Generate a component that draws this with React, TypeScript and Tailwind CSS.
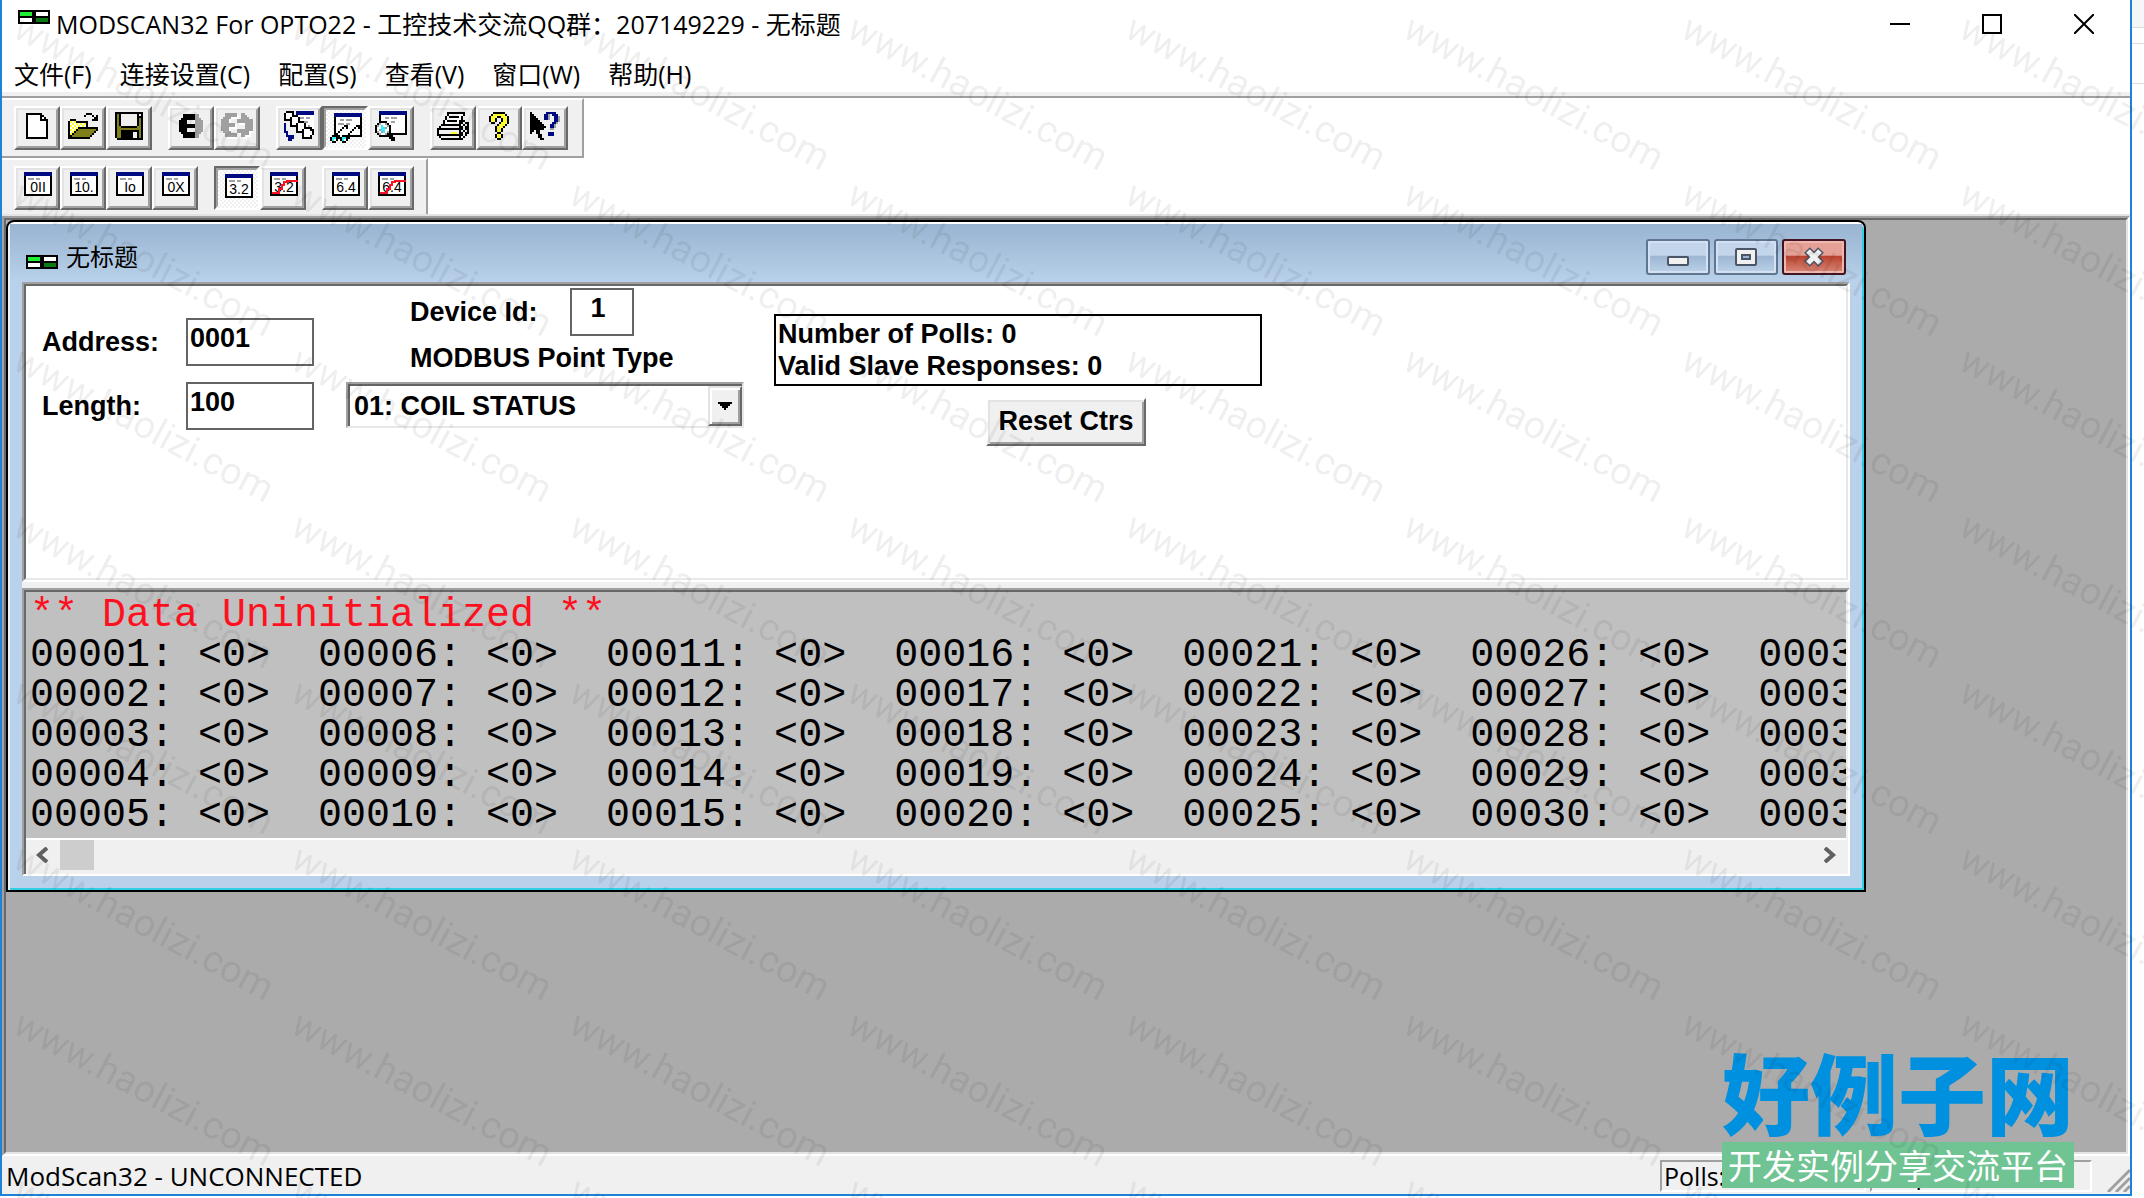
import React from "react";

const COLORS: Record<string, string> = {
  k: "#000000",
  w: "#ffffff",
  n: "#000a80",
  g: "#a0a0a0",
  y: "#ffff30",
  d: "#80801a",
  c: "#30f0ff",
};

function Pixels({ rows, label }: { rows: string[]; label: string }) {
  const w = rows[0].length;
  const h = rows.length;
  return (
    <svg width={w * 2} height={h * 2} viewBox={`0 0 ${w} ${h}`} shapeRendering="crispEdges" role="img" aria-label={label}>
      {rows.flatMap((row, y) =>
        row.split("").map((ch, x) => (COLORS[ch] ? <rect key={`${x}-${y}`} x={x} y={y} width={1} height={1} fill={COLORS[ch]} /> : null)),
      )}
    </svg>
  );
}

const NEW_FILE = [
  "kkkkkkkk...",
  "kwwwwwwkk..",
  "kwwwwwwkwk.",
  "kwwwwwwkkkk",
  "kwwwwwwwwwk",
  "kwwwwwwwwwk",
  "kwwwwwwwwwk",
  "kwwwwwwwwwk",
  "kwwwwwwwwwk",
  "kwwwwwwwwwk",
  "kwwwwwwwwwk",
  "kwwwwwwwwwk",
  "kkkkkkkkkkk",
];
const OPEN_FILE = [
  ".........kkk...",
  "........k...k.k",
  ".............kk",
  ".kkk........kkk",
  "kywykkkkkk.....",
  "kwywywywyk.....",
  "kywywywywk.....",
  "kwywykkkkkkkkkk",
  "kywykdddddddddk",
  "kwykdddddddddk.",
  "kykdddddddddk..",
  "kkdddddddddk...",
  "kkkkkkkkkkk....",
];
const SAVE_FILE = [
  "kkkkkkkkkkkkkk",
  "kdk........k.k",
  "kdk........kkk",
  "kdk........kdk",
  "kdk........kdk",
  "kdk........kdk",
  "kdk........kdk",
  "kddkkkkkkkkddk",
  "kddddddddddddk",
  "kddkkkkkkkkkdk",
  "kddkkkkkk..kdk",
  "kddkkkkkk..kdk",
  "kddkkkkkk..kdk",
  ".kkkkkkkkkkkkk",
];
const CONNECT = [
  "..kkkkkkgg..",
  "..kkkkkkgg..",
  ".kkkkkkkggg.",
  "kkkk....gggg",
  "kkkk....gggg",
  "kkkkkkkkgggg",
  "kkkkkkkkgggg",
  "kkkk....gggg",
  "kkkk....gggg",
  ".kkkkkkkggg.",
  "..kkkkkkgg..",
  "..kkkkkkgg..",
];
const DISCONNECT = [
  "..gggggg..gg....",
  "..ggggggw.ggg...",
  ".ggggwwww.gggg..",
  "ggggw...gggggggg",
  "ggggw...gggggggg",
  "ggggggg..wwwgggg",
  "gggggggw....gggg",
  "ggggwwww....gggg",
  "ggggw...gggggggg",
  ".gggg...ggggggww",
  "..gggggg.wggggw.",
  "..ggggggw.ggwww.",
  "...wwwwww..ww...",
];
const CASCADE = [
  ".kkkk.nnnnnnnnn",
  "kwwwk.nnnnnnnnn",
  "kwwwkkkwwwwwwww",
  "kwwkwwwkggwggww",
  "kkkkwwwkwwwwwww",
  "...kwwwkkkggwww",
  "n..kwwkwwwkwwww",
  "n..kkkkwwwkwgww",
  "n.....kwwwkkkkw",
  "n.....kwwkwwwkk",
  "nn....kkkkwwwwk",
  ".n.......kwwwwk",
  ".nnnn....kwwwk.",
  "..nnn....kkkkk.",
  "..nn...........",
];
const GLASSES = [
  "..nnnnnnnnnnnnnn",
  "..nnnnnnnnnnnnnn",
  "..kwwwwwwwwwwwwk",
  "..kwwggwgggwwwwk",
  "..kwwwwwwwwwwwwk",
  "..kwgggwggwwwwwk",
  "..kwwwwkkwwwwkkk",
  "..kwwwkwkwwwkwkk",
  "..kwwkwwwwwkwwwk",
  "..kwkwwwwwkwwwwk",
  "..kkwwwwwkwwwwwk",
  ".kkkkwkkkkkkkkkk",
  "kcckkkcckk......",
  "kcwk.kcwk.......",
  ".kk...kk........",
];
const MAGNIFIER = [
  "..nnnnnnnnnnnnnn",
  "..nnnnnnnnnnnnnn",
  "..kwwwwwwwwwwwwk",
  "..kwwggwgggwwwwk",
  "..kwwwwwwwwwwwwk",
  "..kkkkwwggwwwwwk",
  ".kgwwgkwwwwwwwwk",
  "kgwcwwgkwwwwwwwk",
  "kwwccgwkwwwwwwwk",
  "kwgccwwkwwwwwwwk",
  "kgwgcwgkwwwwwwwk",
  ".kgwwgkkkkkkkkkk",
  "..kkkkkkk.......",
  ".......kkk......",
  "........kk......",
];
const PRINTER = [
  ".....kkkkkkkkk..",
  ".....kwwwwwwwk..",
  "....kwkkkkkwk...",
  "....kwwwwwwwk...",
  "...kwkkkkkwkkk..",
  "...kwwwwwwwkk.kk",
  "..kkkkkkkkkk.k.k",
  ".k.........kk.kk",
  "kkkkkkkkkkkkk.kk",
  "k..........k.k.k",
  "k......yyy.kk.kk",
  "kkkkkkkkkkkkk.k.",
  ".k.........k.k..",
  "..kkkkkkkkkkk...",
];
const HELP = [
  "..kkkkkk..",
  ".kyyyyyyk.",
  "kyyykkyyyk",
  "kyyk..kyyk",
  "kyyk..kyyk",
  ".kk..kyyyk",
  "....kyyyk.",
  "...kyyyk..",
  "...kyyk...",
  "...kyyk...",
  "....kk....",
  "...kyyk...",
  "...kyyk...",
  "....kk....",
];
const CONTEXT_HELP = [
  "k.......nnnnn..",
  "kk.....nng.nnn.",
  "kkk....nng..nng",
  "kkkk...nng..nng",
  "kkkkk.......nng",
  "kkkkkk.....nng.",
  "kkkkkkk...nng..",
  "kkkkkkkk..nng..",
  "kkkkkkk...gg...",
  "kk.kk..........",
  "k..kk....nnn...",
  "....kk...nnn...",
  "....kk.........",
  ".....kk........",
];

function FormatIcon({ text, struck }: { text: string; struck?: boolean }) {
  return (
    <svg width="28" height="24" viewBox="0 0 28 24" className="mb-1 ml-0.5" aria-hidden="true">
      <g shapeRendering="crispEdges">
        <rect x="0" y="0" width="28" height="24" fill="#000" />
        <rect x="0" y="0" width="28" height="4" fill="#000a80" />
        <rect x="2" y="4" width="24" height="18" fill="#fff" />
        <rect x="4" y="6" width="6" height="2" fill="#a0a0a0" />
        <rect x="12" y="6" width="4" height="2" fill="#a0a0a0" />
      </g>
      <text x="14" y="20" textAnchor="middle" fontFamily="Liberation Sans" fontSize="14" fill="#000">
        {text}
      </text>
      {struck && <path d="M2 21h7v-4h3v-4h2v-3h3V9h11" fill="none" stroke="#ff1020" strokeWidth="2" shapeRendering="crispEdges" />}
    </svg>
  );
}

function ToolButton({ label, pressed, children }: { label: string; pressed?: boolean; children: React.ReactNode }) {
  return pressed ? (
    <button
      aria-label={label}
      aria-pressed="true"
      className="h-11 w-[46px] border-2 border-t-[#696969] border-l-[#696969] border-r-white border-b-white bg-[repeating-conic-gradient(#ffffff_0_25%,#f0f0f0_0_50%)] bg-size-[4px_4px]"
    >
      <span className="flex h-10 items-center justify-center border-2 border-transparent border-t-[#a0a0a0] border-l-[#a0a0a0] pl-0.5">{children}</span>
    </button>
  ) : (
    <button
      aria-label={label}
      className="h-11 w-[46px] border-2 border-t-white border-l-white border-r-[#696969] border-b-[#696969] bg-[#f0f0f0]"
    >
      <span className="flex h-10 items-center justify-center border-2 border-t-[#e3e3e3] border-l-[#e3e3e3] border-r-[#a0a0a0] border-b-[#a0a0a0] pb-1">{children}</span>
    </button>
  );
}

function AppIcon() {
  return (
    <svg width="32" height="14" viewBox="0 0 32 14" shapeRendering="crispEdges" aria-hidden="true">
      <rect width="32" height="14" fill="#000" />
      <rect x="2" y="2" width="12" height="4" fill="#20f030" />
      <rect x="18" y="2" width="12" height="4" fill="#fff" />
      <rect x="2" y="8" width="12" height="4" fill="#fff" />
      <rect x="18" y="8" width="12" height="4" fill="#0c7a14" />
    </svg>
  );
}

const MENU = ["文件(F)", "连接设置(C)", "配置(S)", "查看(V)", "窗口(W)", "帮助(H)"];

const pad = (n: number) => String(n).padStart(5, "0");
const LINES = [1, 2, 3, 4, 5].map((start) =>
  Array.from({ length: 7 }, (_, i) => `${pad(start + i * 5)}: <0>`).join("  "),
);

const CHILD_BUTTON =
  "flex h-9 w-16 items-center justify-center rounded-[3px] border-2 border-[#5f7590] bg-linear-to-b from-[#c3d5ea] from-45% via-[#9db5d0] via-46% to-[#bcd2ea] shadow-[inset_0_0_0_2px_#d3e1f2]";

function ChildWindow() {
  return (
    <section
      aria-label="无标题"
      className="absolute top-0 left-0 flex w-[1860px] max-w-full flex-col rounded-t-lg border-2 border-black bg-[#b9d1ea] shadow-[inset_0_2px_0_#ffffff,inset_2px_0_0_#e8f2fb,inset_-2px_-2px_0_#30cfe4]"
    >
      <header className="mx-0.5 mt-0.5 flex h-[58px] items-center bg-linear-to-b from-[#99b4d1] to-[#b9d1ea] px-4 pt-2">
        <span className="pt-2.5">
          <AppIcon />
        </span>
        <h2 className="flex-1 pl-2 text-2xl">无标题</h2>
        <div className="flex gap-1">
          <button aria-label="最小化" className={CHILD_BUTTON}>
            <span className="mt-2 h-2.5 w-[22px] rounded-xs border-2 border-[#4b5568] bg-[#f0f0f0]" />
          </button>
          <button aria-label="最大化" className={CHILD_BUTTON}>
            <span className="flex h-[18px] w-[22px] items-center justify-center rounded-xs border-2 border-[#4b5568] bg-[#f0f0f0]">
              <span className="h-1.5 w-2.5 border-2 border-[#4b5568] bg-[#9db5d0]" />
            </span>
          </button>
          <button
            aria-label="关闭"
            className="flex h-9 w-16 items-center justify-center rounded-[3px] border-2 border-[#431422] bg-linear-to-b from-[#e5a196] from-45% via-[#b9402c] via-46% to-[#d88878] shadow-[inset_0_0_0_2px_#eeb8ae]"
          >
            <svg width="24" height="20" viewBox="0 0 24 20" aria-hidden="true">
              <path d="M5 3l14 14M19 3L5 17" stroke="#4b5568" strokeWidth="8" fill="none" />
              <path d="M6 4l12 12M18 4L6 16" stroke="#f2f2f2" strokeWidth="5" fill="none" />
            </svg>
          </button>
        </div>
      </header>

      <div className="mx-3.5 mb-3.5 flex flex-col">
        <div className="flex h-[300px] items-start border-2 border-t-[#a0a0a0] border-l-[#a0a0a0] border-r-white border-b-white">
          <form
            className="flex h-full flex-1 items-start border-2 border-t-[#696969] border-l-[#696969] border-r-[#e8e8e8] border-b-[#e8e8e8] bg-white font-['Liberation_Sans','Noto_Sans_CJK_SC',sans-serif] text-[27px] leading-8 font-bold"
            onSubmit={(e) => e.preventDefault()}
          >
            <div className="grid grid-cols-[144px_128px] gap-x-0 gap-y-4 pt-8 pl-4">
              <label htmlFor="address" className="pt-2">
                Address:
              </label>
              <input id="address" defaultValue="0001" className="h-12 border-2 border-[#646464] bg-white px-0.5 pb-2 outline-none" />
              <label htmlFor="length" className="pt-2">
                Length:
              </label>
              <input id="length" defaultValue="100" className="h-12 border-2 border-[#646464] bg-white px-0.5 pb-2 outline-none" />
            </div>

            <div className="ml-8 flex flex-col pt-0.5">
              <div className="ml-16 flex h-12 w-[224px] items-start justify-between">
                <label htmlFor="device" className="pt-2">
                  Device Id:
                </label>
                <input id="device" defaultValue="1" className="h-12 w-16 border-2 border-[#646464] bg-white pr-2 pb-2 text-center outline-none" />
              </div>
              <label htmlFor="point" className="mt-1.5 ml-16 h-[40px] pt-0">
                MODBUS Point Type
              </label>
              <div className="relative border-2 border-t-[#a0a0a0] border-l-[#a0a0a0] border-r-[#e8e8e8] border-b-[#e8e8e8]">
                <select
                  id="point"
                  className="block h-[42px] w-[394px] appearance-none border-t-2 border-l-2 border-[#646464] bg-white pl-1 outline-none"
                >
                  <option>01: COIL STATUS</option>
                  <option>02: INPUT STATUS</option>
                  <option>03: HOLDING REGISTER</option>
                  <option>04: INPUT REGISTER</option>
                </select>
                <span className="pointer-events-none absolute top-0.5 right-0 bottom-0 flex w-[34px] items-center justify-center border-2 border-t-[#e3e3e3] border-l-[#e3e3e3] border-r-[#696969] border-b-[#696969] bg-[#f0f0f0] shadow-[inset_2px_2px_0_#ffffff,inset_-2px_-2px_0_#a0a0a0]">
                  <svg width="14" height="8" viewBox="0 0 7 4" shapeRendering="crispEdges" aria-hidden="true">
                    <path d="M0 0h7v1H6v1H5v1H4v1H3V3H2V2H1V1H0z" />
                  </svg>
                </span>
              </div>
            </div>

            <div className="ml-[30px] flex w-[488px] flex-col items-center pt-7">
              <div className="w-full border-2 border-black pt-0.5 pb-0.5 pl-0.5">
                <p>Number of Polls: 0</p>
                <p>Valid Slave Responses: 0</p>
              </div>
              <button
                type="button"
                className="mt-3 ml-24 h-12 w-40 border-2 border-t-white border-l-white border-r-[#696969] border-b-[#696969] bg-[#f0f0f0] pb-0.5 shadow-[inset_2px_2px_0_#e3e3e3,inset_-2px_-2px_0_#a0a0a0]"
              >
                Reset Ctrs
              </button>
            </div>
          </form>
        </div>

        <div className="h-1.5 bg-[#f0f0f0]" />

        <div className="border-2 border-t-[#a0a0a0] border-l-[#a0a0a0] border-r-white border-b-white">
          <div className="border-2 border-t-[#696969] border-l-[#696969] border-r-[#f0f0f0] border-b-0">
            <div className="overflow-hidden bg-[#c0c0c0] pt-1 pb-0.5 pl-1 font-['Liberation_Mono',monospace] text-[40px] leading-10 whitespace-pre">
              <p className="text-[#ff1020]">** Data Uninitialized **</p>
              {LINES.map((line) => (
                <p key={line}>{line}</p>
              ))}
            </div>
            <div className="flex h-9 items-start border-t-2 border-white bg-[#f0f0f0]">
              <button aria-label="向左滚动" className="flex h-[30px] w-8 items-center justify-center">
                <svg width="14" height="16" viewBox="0 0 14 16" aria-hidden="true">
                  <path d="M12 1L4 8l8 7" fill="none" stroke="#606060" strokeWidth="4" />
                </svg>
              </button>
              <div className="flex flex-1 pl-0.5">
                <div className="h-[30px] w-[34px] bg-[#cdcdcd]" />
              </div>
              <button aria-label="向右滚动" className="flex h-[30px] w-8 items-center justify-center">
                <svg width="14" height="16" viewBox="0 0 14 16" aria-hidden="true">
                  <path d="M2 1l8 7-8 7" fill="none" stroke="#606060" strokeWidth="4" />
                </svg>
              </button>
            </div>
          </div>
        </div>
      </div>
    </section>
  );
}

function Watermark() {
  return (
    <div aria-hidden="true" className="pointer-events-none absolute inset-0 overflow-hidden">
      <div className="grid auto-rows-[166px] grid-cols-[repeat(8,278px)] pl-[30px]">
        {Array.from({ length: 64 }, (_, i) => (
          <span
            key={i}
            className="origin-top-left rotate-[28deg] font-['Roboto',sans-serif] text-[38px] font-normal whitespace-nowrap text-black/8"
          >
            www.haolizi.com
          </span>
        ))}
      </div>
    </div>
  );
}

export default function App() {
  return (
    <div className="relative flex h-screen min-h-[1000px] overflow-hidden bg-white pb-0.5 font-['Open_Sans','Noto_Sans_CJK_SC',sans-serif] text-black">
      <div className="flex min-w-0 flex-1 flex-col border-2 border-t-0 border-[#1e82d6] bg-white">
        <header className="flex h-[54px] items-start pl-4">
          <span className="pt-2.5">
            <AppIcon />
          </span>
          <h1 className="flex-1 pt-2 pl-1.5 text-[25px] leading-8">MODSCAN32 For OPTO22 - 工控技术交流QQ群：207149229 - 无标题</h1>
          <button aria-label="最小化" className="flex h-12 w-[92px] items-center justify-center">
            <svg width="20" height="20" viewBox="0 0 20 20" shapeRendering="crispEdges" aria-hidden="true">
              <path d="M0 10h20" stroke="#000" strokeWidth="2" />
            </svg>
          </button>
          <button aria-label="最大化" className="flex h-12 w-[92px] items-center justify-center">
            <span className="h-5 w-5 border-2 border-black" />
          </button>
          <button aria-label="关闭" className="flex h-12 w-[92px] items-center justify-center">
            <svg width="20" height="20" viewBox="0 0 20 20" aria-hidden="true">
              <path d="M0 0l20 20M20 0L0 20" stroke="#000" strokeWidth="2" />
            </svg>
          </button>
        </header>

        <nav className="flex h-[38px] items-center gap-7 pt-1 pl-3 text-[25px]">
          {MENU.map((m) => (
            <button key={m} className="whitespace-nowrap">
              {m}
            </button>
          ))}
        </nav>

        <div className="h-1.5 border-b-2 border-[#a0a0a0] bg-[#f0f0f0]" />

        <div className="flex flex-col border-b-2 border-[#e3e3e3]">
          <div className="flex w-[582px] border-b-2 border-[#a0a0a0]">
            <div role="toolbar" aria-label="标准" className="flex flex-1 gap-4 border-t-2 border-r-2 border-t-white border-r-[#a0a0a0] bg-[#f0f0f0] pt-1.5 pr-3 pb-1.5 pl-3">
              <div className="flex">
                <ToolButton label="新建"><Pixels rows={NEW_FILE} label="新建" /></ToolButton>
                <ToolButton label="打开"><Pixels rows={OPEN_FILE} label="打开" /></ToolButton>
                <ToolButton label="保存"><Pixels rows={SAVE_FILE} label="保存" /></ToolButton>
              </div>
              <div className="flex">
                <ToolButton label="连接"><Pixels rows={CONNECT} label="连接" /></ToolButton>
                <ToolButton label="断开"><Pixels rows={DISCONNECT} label="断开" /></ToolButton>
              </div>
              <div className="flex">
                <ToolButton label="数据定义"><Pixels rows={CASCADE} label="数据定义" /></ToolButton>
                <ToolButton label="显示数据" pressed><Pixels rows={GLASSES} label="显示数据" /></ToolButton>
                <ToolButton label="显示通讯"><Pixels rows={MAGNIFIER} label="显示通讯" /></ToolButton>
              </div>
              <div className="flex">
                <ToolButton label="打印"><Pixels rows={PRINTER} label="打印" /></ToolButton>
                <ToolButton label="关于"><Pixels rows={HELP} label="关于" /></ToolButton>
                <ToolButton label="帮助"><Pixels rows={CONTEXT_HELP} label="帮助" /></ToolButton>
              </div>
            </div>
          </div>
          <div role="toolbar" aria-label="格式" className="flex w-[426px] gap-4 border-t-2 border-r-2 border-t-white border-r-[#a0a0a0] bg-[#f0f0f0] pt-1.5 pb-1 pl-3">
            <div className="flex">
              <ToolButton label="二进制"><FormatIcon text="0II" /></ToolButton>
              <ToolButton label="十进制"><FormatIcon text="10." /></ToolButton>
              <ToolButton label="整数"><FormatIcon text="Io" /></ToolButton>
              <ToolButton label="十六进制"><FormatIcon text="0X" /></ToolButton>
            </div>
            <div className="flex">
              <ToolButton label="浮点" pressed><FormatIcon text="3.2" /></ToolButton>
              <ToolButton label="交换浮点"><FormatIcon text="3.2" struck /></ToolButton>
            </div>
            <div className="flex">
              <ToolButton label="双精度"><FormatIcon text="6.4" /></ToolButton>
              <ToolButton label="交换双精度"><FormatIcon text="6.4" struck /></ToolButton>
            </div>
          </div>
        </div>

        <main className="flex flex-1 border-2 border-t-[#a0a0a0] border-l-[#a0a0a0] border-r-white border-b-white">
          <div className="relative flex-1 border-2 border-t-[#696969] border-l-[#696969] border-r-[#e3e3e3] border-b-[#e3e3e3] bg-[#ababab]">
            <ChildWindow />
          </div>
        </main>

        <footer className="flex h-[38px] items-stretch bg-[#f0f0f0] pl-1 text-[25px] leading-10">
          <p className="flex-1 text-[26px]">ModScan32 - UNCONNECTED</p>
          <p className="mt-1 mr-1 mb-0.5 w-[206px] overflow-hidden border-2 border-t-[#a0a0a0] border-l-[#a0a0a0] border-r-white border-b-white pl-0.5 leading-7">Polls: 0</p>
          <p className="mt-1 mb-0.5 w-[222px] overflow-hidden border-2 border-t-[#a0a0a0] border-l-[#a0a0a0] border-r-white border-b-white pl-0.5 leading-7">Resps: 0</p>
          <span className="flex w-[38px] items-end justify-end pb-0.5">
            <svg width="24" height="24" viewBox="0 0 24 24" aria-hidden="true">
              <path d="M2 24L24 2M10 24L24 10M18 24l6-6" stroke="#a0a0a0" strokeWidth="3" />
            </svg>
          </span>
        </footer>
      </div>

      <div className="flex w-3 flex-col bg-white">
        <div className="h-7 border-b border-[#dcdcdc] bg-[#f4f6f8]" />
        <div className="h-4 border-b border-[#dcdcdc]" />
        <div className="h-10 border-b border-[#dcdcdc]" />
      </div>

      <div className="absolute right-[70px] bottom-2.5 flex flex-col">
        <p className="text-center font-['Noto_Sans_CJK_SC',sans-serif] text-[88px] leading-[104px] font-black text-[#0090e0]">好例子网</p>
        <p className="bg-[#70c392] px-1 text-center font-['Noto_Sans_CJK_SC',sans-serif] text-[34px] leading-[46px] text-white">开发实例分享交流平台</p>
      </div>

      <Watermark />
    </div>
  );
}
